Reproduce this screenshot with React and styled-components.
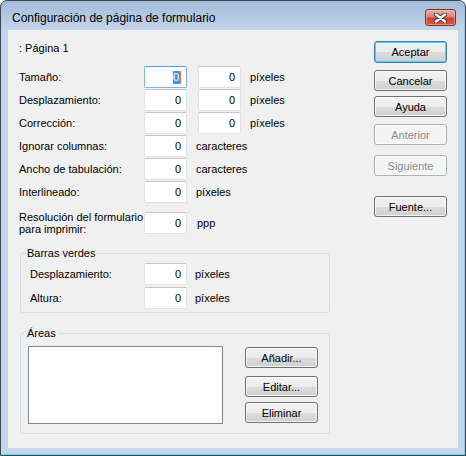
import React from 'react';
import styled, {createGlobalStyle} from 'styled-components';

const GlobalStyle = createGlobalStyle`
  html, body {
    margin: 0;
    padding: 0;
    background: #ffffff;
  }
  body {
    font-family: "Liberation Sans", Arial, sans-serif;
    font-size: 11px;
    color: #000;
  }
`;

const Window = styled.div`
  box-sizing: border-box;
  width: 466px;
  height: 456px;
  border: 1px solid #3b4654;
  border-radius: 7px 7px 0 0;
  background: linear-gradient(to bottom, #a3bbd8 0px, #c3d6ec 30px, #c3d6ec 100%);
  box-shadow: inset 0 -1px 0 #6ad2ee, inset -1px 0 0 #9fc4e4;
  padding: 0 7px 7px 7px;
  display: flex;
  flex-direction: column;
  overflow: hidden;
`;

const TitleBar = styled.div`
  height: 29px;
  flex: none;
  display: flex;
  justify-content: space-between;
  align-items: flex-start;
`;

const Title = styled.div`
  font-family: "Liberation Sans", Arial, sans-serif;
  font-size: 12px;
  line-height: 15px;
  margin: 10px 0 0 4px;
`;

const CloseButton = styled.div`
  box-sizing: border-box;
  width: 31px;
  height: 17px;
  margin: 8px 2px 0 0;
  border: 1px solid #7a3126;
  border-radius: 3px;
  background: linear-gradient(to bottom, #eab0a4 0%, #d9826f 45%, #c8452f 55%, #d35a3f 100%);
  box-shadow: inset 0 0 0 1px rgba(255, 215, 200, 0.45);
  display: flex;
  align-items: center;
  justify-content: center;
`;

const Client = styled.div`
  flex: 1;
  background: #f0f0f0;
  display: flex;
  padding: 12px 0 0 11px;
`;

const FormColumn = styled.div`
  width: 311px;
  display: flex;
  flex-direction: column;
`;

const PageLabel = styled.div`
  line-height: 13px;
  height: 13px;
  margin-bottom: 11px;
`;

const Row = styled.div`
  display: flex;
  align-items: center;
  height: ${p => p.$tall ? 24 : 22}px;
  margin-top: ${p => p.$mt ?? 1}px;
`;

const Label = styled.div`
  width: ${p => p.$w || 125}px;
  flex: none;
  line-height: 12px;
`;

const Field = styled.div`
  box-sizing: border-box;
  width: 43px;
  height: 22px;
  flex: none;
  background: #ffffff;
  border: 1px solid ${p => p.$focused ? '#7eb4ea' : '#e2e3e6'};
  border-top-color: ${p => p.$focused ? '#569de5' : '#c4c6cb'};
  border-radius: 2px;
  margin-left: ${p => p.$gap || 0}px;
  padding-right: 5px;
  display: flex;
  align-items: center;
  justify-content: flex-end;
  line-height: 13px;
`;

const Selected = styled.span`
  background: #3399ff;
  color: #ffffff;
  border-right: 2px solid #e07a20;
  line-height: 13px;
`;

const Unit = styled.div`
  margin-left: ${p => p.$gap || 9}px;
`;

const Group = styled.fieldset`
  box-sizing: border-box;
  width: 310px;
  margin: ${p => p.$mt}px 0 0 1px;
  padding: 0;
  border: 1px solid #d5dfe5;
  border-radius: 3px;
  min-inline-size: 0;
`;

const Caption = styled.legend`
  margin-left: 4px;
  padding: 0 2px;
  line-height: 13px;
`;

const GroupBody = styled.div`
  padding: ${p => p.$pad};
`;

const AreasBody = styled(GroupBody)`
  display: flex;
  align-items: flex-start;
`;

const ListBox = styled.div`
  box-sizing: border-box;
  width: 195px;
  height: 78px;
  background: #ffffff;
  border: 1px solid #828790;
`;

const SideButtons = styled.div`
  display: flex;
  flex-direction: column;
  margin-left: ${p => p.$ml}px;
  padding-top: ${p => p.$pt || 0}px;
`;

const Button = styled.button`
  box-sizing: border-box;
  width: 73px;
  height: ${p => p.$h || 21}px;
  padding: 0;
  font-family: "Liberation Sans", Arial, sans-serif;
  font-size: 11px;
  color: ${p => p.disabled ? '#8c8c8c' : '#000000'};
  border: 1px solid ${p => p.$default ? '#3c7fb1' : p.disabled ? '#adb2b5' : '#707070'};
  border-radius: 3px;
  background: ${p => p.disabled
    ? '#f4f4f4'
    : 'linear-gradient(to bottom, #f2f2f2 0%, #ebebeb 50%, #dddddd 50%, #cfcfcf 100%)'};
  box-shadow: inset 0 0 0 1px ${p => p.$default ? '#4bd3f5' : p.disabled ? '#fbfbfb' : 'rgba(255,255,255,0.75)'};
  margin-top: ${p => p.$mt || 0}px;
`;

const CloseIcon = () => (
  <svg width="13" height="10" viewBox="0 0 13 10">
    <path d="M2 1.5 L11 8.5 M11 1.5 L2 8.5" stroke="#4a3a38" strokeWidth="4.2" strokeLinecap="round" />
    <path d="M2 1.5 L11 8.5 M11 1.5 L2 8.5" stroke="#ffffff" strokeWidth="2.4" strokeLinecap="round" />
  </svg>
);

const App = () => {
  return (
    <>
      <GlobalStyle />
      <Window>
        <TitleBar>
          <Title>Configuración de página de formulario</Title>
          <CloseButton><CloseIcon /></CloseButton>
        </TitleBar>
        <Client>
          <FormColumn>
            <PageLabel>: Página 1</PageLabel>

            <Row $mt={0}>
              <Label>Tamaño:</Label>
              <Field $focused><Selected>0</Selected></Field>
              <Field $gap={11}>0</Field>
              <Unit>píxeles</Unit>
            </Row>
            <Row>
              <Label>Desplazamiento:</Label>
              <Field>0</Field>
              <Field $gap={11}>0</Field>
              <Unit>píxeles</Unit>
            </Row>
            <Row>
              <Label>Corrección:</Label>
              <Field>0</Field>
              <Field $gap={11}>0</Field>
              <Unit>píxeles</Unit>
            </Row>
            <Row>
              <Label>Ignorar columnas:</Label>
              <Field>0</Field>
              <Unit>caracteres</Unit>
            </Row>
            <Row>
              <Label>Ancho de tabulación:</Label>
              <Field>0</Field>
              <Unit>caracteres</Unit>
            </Row>
            <Row>
              <Label>Interlineado:</Label>
              <Field>0</Field>
              <Unit>píxeles</Unit>
            </Row>
            <Row $tall $mt={8}>
              <Label>Resolución del formulario<br />para imprimir:</Label>
              <Field>0</Field>
              <Unit $gap={10}>ppp</Unit>
            </Row>

            <Group $mt={12}>
              <Caption>Barras verdes</Caption>
              <GroupBody $pad="3px 0 3px 9px">
                <Row $mt={0}>
                  <Label $w={114}>Desplazamiento:</Label>
                  <Field>0</Field>
                  <Unit $gap={8}>píxeles</Unit>
                </Row>
                <Row $mt={2}>
                  <Label $w={114}>Altura:</Label>
                  <Field>0</Field>
                  <Unit $gap={8}>píxeles</Unit>
                </Row>
              </GroupBody>
            </Group>

            <Group $mt={14}>
              <Caption>Áreas</Caption>
              <AreasBody $pad="6px 0 9px 7px">
                <ListBox />
                <SideButtons $ml={22} $pt={1}>
                  <Button>Añadir...</Button>
                  <Button $mt={8}>Editar...</Button>
                  <Button $mt={5}>Eliminar</Button>
                </SideButtons>
              </AreasBody>
            </Group>
          </FormColumn>

          <SideButtons $ml={44} $pt={-1}>
            <Button $default $h={22} style={{marginTop: -1}}>Aceptar</Button>
            <Button $mt={7}>Cancelar</Button>
            <Button $mt={5}>Ayuda</Button>
            <Button $mt={7} disabled>Anterior</Button>
            <Button $mt={10} disabled>Siguiente</Button>
            <Button $mt={20}>Fuente...</Button>
          </SideButtons>
        </Client>
      </Window>
    </>
  );
};

export default App;
